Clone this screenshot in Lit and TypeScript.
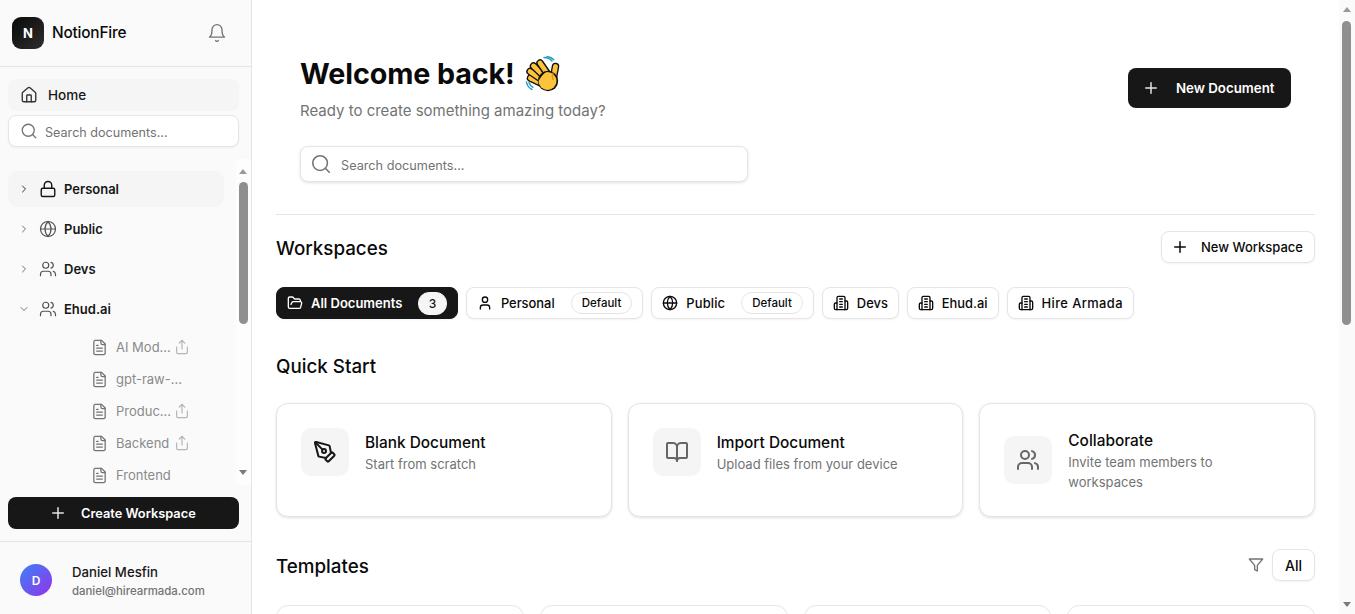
import { LitElement, html, css, svg } from "lit";
import { customElement } from "lit/decorators.js";

const P: Record<string, any> = {
  house: svg`<path d="M15 21v-8a1 1 0 0 0-1-1h-4a1 1 0 0 0-1 1v8"/><path d="M3 10a2 2 0 0 1 .709-1.528l7-5.999a2 2 0 0 1 2.582 0l7 5.999A2 2 0 0 1 21 10v9a2 2 0 0 1-2 2H5a2 2 0 0 1-2-2z"/>`,
  search: svg`<circle cx="11" cy="11" r="8"/><path d="m21 21-4.3-4.3"/>`,
  bell: svg`<path d="M6 8a6 6 0 0 1 12 0c0 7 3 9 3 9H3s3-2 3-9"/><path d="M10.3 21a1.94 1.94 0 0 0 3.4 0"/>`,
  lock: svg`<rect width="18" height="11" x="3" y="11" rx="2"/><path d="M7 11V7a5 5 0 0 1 10 0v4"/>`,
  globe: svg`<circle cx="12" cy="12" r="10"/><path d="M12 2a14.5 14.5 0 0 0 0 20 14.5 14.5 0 0 0 0-20"/><path d="M2 12h20"/>`,
  users: svg`<path d="M16 21v-2a4 4 0 0 0-4-4H6a4 4 0 0 0-4 4v2"/><circle cx="9" cy="7" r="4"/><path d="M22 21v-2a4 4 0 0 0-3-3.87"/><path d="M16 3.13a4 4 0 0 1 0 7.75"/>`,
  file: svg`<path d="M15 2H6a2 2 0 0 0-2 2v16a2 2 0 0 0 2 2h12a2 2 0 0 0 2-2V7Z"/><path d="M14 2v4a2 2 0 0 0 2 2h4"/><path d="M10 9H8"/><path d="M16 13H8"/><path d="M16 17H8"/>`,
  share: svg`<path d="M4 12v8a2 2 0 0 0 2 2h12a2 2 0 0 0 2-2v-8"/><polyline points="16 6 12 2 8 6"/><line x1="12" x2="12" y1="2" y2="15"/>`,
  plus: svg`<path d="M5 12h14"/><path d="M12 5v14"/>`,
  folder: svg`<path d="m6 14 1.5-2.9A2 2 0 0 1 9.24 10H20a2 2 0 0 1 1.94 2.5l-1.54 6a2 2 0 0 1-1.95 1.5H4a2 2 0 0 1-2-2V5a2 2 0 0 1 2-2h3.9a2 2 0 0 1 1.69.9l.81 1.2a2 2 0 0 0 1.69.9H18a2 2 0 0 1 2 2v2"/>`,
  user: svg`<path d="M19 21v-2a4 4 0 0 0-4-4H9a4 4 0 0 0-4 4v2"/><circle cx="12" cy="7" r="4"/>`,
  building: svg`<path d="M6 22V4a2 2 0 0 1 2-2h8a2 2 0 0 1 2 2v18Z"/><path d="M6 12H4a2 2 0 0 0-2 2v6a2 2 0 0 0 2 2h2"/><path d="M18 9h2a2 2 0 0 1 2 2v9a2 2 0 0 1-2 2h-2"/><path d="M10 6h4"/><path d="M10 10h4"/><path d="M10 14h4"/><path d="M10 18h4"/>`,
  pen: svg`<path d="M15.707 21.293a1 1 0 0 1-1.414 0l-1.586-1.586a1 1 0 0 1 0-1.414l5.586-5.586a1 1 0 0 1 1.414 0l1.586 1.586a1 1 0 0 1 0 1.414z"/><path d="m18 13-1.375-6.874a1 1 0 0 0-.746-.776L3.235 2.028a1 1 0 0 0-1.207 1.207L5.35 15.879a1 1 0 0 0 .776.746L13 18"/><path d="m2.3 2.3 7.286 7.286"/><circle cx="11" cy="11" r="2"/>`,
  book: svg`<path d="M12 7v14"/><path d="M3 18a1 1 0 0 1-1-1V4a1 1 0 0 1 1-1h5a4 4 0 0 1 4 4 4 4 0 0 1 4-4h5a1 1 0 0 1 1 1v13a1 1 0 0 1-1 1h-6a3 3 0 0 0-3 3 3 3 0 0 0-3-3z"/>`,
  filter: svg`<polygon points="22 3 2 3 10 12.46 10 19 14 21 14 12.46 22 3"/>`,
  right: svg`<path d="m9 18 6-6-6-6"/>`,
  down: svg`<path d="m6 9 6 6 6-6"/>`,
};

const icon = (n: string, size = 16, cls = "") =>
  html`<svg class="ic ${cls}" width=${size} height=${size} viewBox="0 0 24 24" fill="none" stroke="currentColor" stroke-width="2" stroke-linecap="round" stroke-linejoin="round">${P[n]}</svg>`;

const fingers: [number, number, number, number][] = [
  [18, 28, 5.5, 22],
  [19, 25, 5, 15.5],
  [21, 22, 8.5, 10],
  [24, 20, 15, 7],
];

const wave = html`<svg class="wave" width="36" height="36" viewBox="0 0 36 36" role="img" aria-label="waving hand">
  <g fill="none" stroke="#1d9bc4" stroke-width="1.4" stroke-linecap="round">
    <path d="M19 1.500c3 0 6 1.200 8 3.500"/><path d="M22 .6c2.500.2 5 1.300 6.800 3.200"/>
    <path d="M1.500 26c.5 3 2.500 6 5.500 7.500"/><path d="M4 26.500c.6 2 2 3.800 4 4.800"/>
  </g>
  <path d="M28 24 30.500 10.500" fill="none" stroke="#111" stroke-width="7.500" stroke-linecap="round"/>
  <path d="M28 24 30.500 10.500" fill="none" stroke="#fdc33a" stroke-width="4.800" stroke-linecap="round"/>
  ${fingers.map(([a, b, c, d]) => svg`
    <path d="M${a} ${b} ${c} ${d}" fill="none" stroke="#111" stroke-width="7.500" stroke-linecap="round"/>
    <path d="M${a} ${b} ${c} ${d}" fill="none" stroke="#fdc33a" stroke-width="4.800" stroke-linecap="round"/>`)}
  <circle cx="23" cy="25" r="10.200" fill="#111"/>
  <path d="M13.500 25a9 9 0 1 0 9-9c-3 0-6 4-9 9z" fill="#fdc33a"/>
  <path d="M28 17c-1.200 2.500-1 4.500 0 6.500" fill="none" stroke="#d99a1c" stroke-width="1.300" stroke-linecap="round"/>
</svg>`;

@customElement("app-root")
export class AppRoot extends LitElement {
  static styles = css`
    :host { display: flex; height: 614px; width: 1355px; overflow: hidden; background: #fff; color: #0a0a0a;
      font-family: Inter, "Noto Sans", sans-serif; font-size: 14px; }
    * { box-sizing: border-box; }
    .ic { flex: none; display: block; }

    /* sidebar */
    .side { width: 252px; flex: none; background: #fafafa; border-right: 1px solid #e5e5e5; display: flex; flex-direction: column; height: 614px; }
    .brand { height: 67px; flex: none; border-bottom: 1px solid #e5e5e5; display: flex; align-items: center; padding: 0 16px 1px 12px; }
    .logo { width: 32px; height: 32px; border-radius: 9px; background: linear-gradient(135deg, #0a0a0a, #2e2e2e); color: #fff; display: flex; align-items: center; justify-content: center; font-weight: 700; font-size: 13px; }
    .bname { margin-left: 8px; font-size: 15.400px; font-weight: 500; flex: 1; letter-spacing: -0.2px; }
    .bell { color: #737373; margin-right: 8px; }
    .bell .ic { stroke-width: 1.6; }
    .nav { padding: 12px 12px 0 8px; display: flex; flex-direction: column; gap: 4px; flex: none; }
    .home { height: 32px; border-radius: 8px; background: #f5f5f5; display: flex; align-items: center; padding-left: 12px; gap: 10px; font-size: 13.500px; font-weight: 500; color: #171717; }
    .home .ic { color: #333; stroke-width: 1.800; }
    .ssearch { height: 32px; border-radius: 8px; background: #fff; border: 1px solid #e5e5e5; box-shadow: 0 1px 2px rgba(0,0,0,.05); display: flex; align-items: center; padding: 0 0 0 11px; gap: 7px; font-size: 12.600px; color: #737373; }
    .ssearch .ic { color: #737373; stroke-width: 1.700; }
    .ssearch span { padding-top: 2px; }
    .treewrap { display: flex; height: 326px; margin-top: 12px; flex: none; }
    .tree { flex: 1; min-width: 0; overflow: hidden; padding: 12px 12px 0 8px; }
    .row { height: 36px; margin-bottom: 4px; border-radius: 10px; display: flex; align-items: center; padding-left: 10px; font-size: 13px; font-weight: 600; color: #171717; }
    .row.on { background: #f5f5f5; }
    .chev { color: #737373; margin-right: 9px; }
    .row.on .chev { color: #333; }
    .rico { color: #525252; margin-right: 7px; stroke-width: 1.600; }
    .row.on .rico { color: #171717; stroke-width: 1.900; }
    .files { padding: 0 0 0 83px; }
    .frow { height: 32px; display: flex; align-items: center; gap: 8px; color: #8a8a8a; font-size: 13px; }
    .frow .doc { color: #737373; stroke-width: 1.800; }
    .frow .sh { color: #b5b5b5; margin-left: -5px; stroke-width: 1.800; }
    .frow .t { white-space: nowrap; width: 55px; }
    .sb { flex: none; background: #fdfdfd; display: flex; flex-direction: column; align-items: center; }
    .sb.small { width: 15px; padding: 10px 1px 10px 0; }
    .sb.big { width: 16px; height: 614px; background: #fafafa; padding: 7px 1px 7px 0; }
    .arr { width: 0; height: 0; border-left: 4.500px solid transparent; border-right: 4.500px solid transparent; flex: none; }
    .arr.u { border-bottom: 5px solid #9a9a9a; }
    .arr.d { border-top: 5px solid #7a7a7a; }
    .thumb { width: 9px; background: #8f8f8f; border-radius: 5px; flex: none; }
    .sp { flex: 1; }
    .create { margin: 12px 12px 0 8px; height: 32px; border-radius: 8px; background: #171717; color: #fff; display: flex; align-items: center; padding-left: 41px; gap: 14px; font-size: 12.800px; font-weight: 600; flex: none; }
    .create .ic { color: #e5e5e5; }
    .foot { margin-top: 12px; border-top: 1px solid #e5e5e5; flex: 1; display: flex; align-items: center; padding: 4px 20px 0 20px; gap: 20px; }
    .av { width: 32px; height: 32px; border-radius: 50%; background: linear-gradient(135deg, #3b82f6, #9333ea); color: #fff; display: flex; align-items: center; justify-content: center; font-size: 12px; font-weight: 600; flex: none; }
    .who { padding-top: 3px; }
    .nm { font-size: 13.200px; font-weight: 500; line-height: 19px; color: #171717; }
    .em { font-size: 11.400px; line-height: 19px; color: #737373; font-weight: 500; }

    /* main */
    .main { flex: 1; min-width: 0; height: 614px; overflow: hidden; padding: 0 24px; }
    .hero { height: 215px; border-bottom: 1px solid #e5e5e5; padding: 55px 24px 0; }
    .toprow { display: flex; align-items: center; justify-content: space-between; }
    h1 { margin: 0; padding-top: 1px; font-size: 28.700px; line-height: 36px; font-weight: 700; display: flex; align-items: center; gap: 10px; letter-spacing: -0.1px; }
    .sub { margin-top: 7px; font-size: 15px; line-height: 24px; color: #737373; }
    .primary { height: 40px; width: 163px; margin-bottom: 2px; background: #171717; border-radius: 8px; color: #fff; display: flex; align-items: center; padding-left: 14px; gap: 16px; font-size: 13.300px; font-weight: 600; }
    .primary .ic { color: #e5e5e5; }
    .msearch { margin-top: 23px; width: 448px; height: 36px; border: 1px solid #e5e5e5; border-radius: 8px; background: #fff; box-shadow: 0 1px 3px rgba(0,0,0,.12); display: flex; align-items: center; padding: 0 0 0 9px; gap: 9px; font-size: 12.700px; color: #737373; }
    .msearch .ic { stroke-width: 1.700; }
    .msearch span { padding-top: 2px; }
    .shead { display: flex; align-items: center; justify-content: space-between; }
    h2 { margin: 0; font-size: 18.800px; line-height: 25px; padding-top: 3px; font-weight: 500; }
    .ws { margin-top: 16px; height: 32px; }
    .outline { height: 32px; border: 1px solid #e5e5e5; border-radius: 8px; background: #fff; box-shadow: 0 1px 2px rgba(0,0,0,.05); display: flex; align-items: center; font-size: 12.900px; font-weight: 500; }
    .newws { width: 154px; padding-left: 9px; gap: 12px; font-size: 13px; }
    .pills { margin-top: 24px; display: flex; gap: 8px; }
    .pill { height: 32px; padding: 0 10px; gap: 8px; white-space: nowrap; }
    .pill.dark { background: #171717; border-color: #171717; color: #fff; font-weight: 600; font-size: 13px; }
    .pub { letter-spacing: .15px; }
    .wide { letter-spacing: .4px; }
    .badge { margin-left: 8px; height: 22px; border-radius: 11px; border: 1px solid #e5e5e5; background: #fff; padding: 0 10px; font-size: 11.500px; display: flex; align-items: center; font-weight: 500; }
    .dark .badge { background: #f5f5f5; border-color: #f5f5f5; color: #171717; padding: 0 9.500px; height: 23px; font-size: 12px; }
    .qs { margin-top: 32px; }
    .cards { margin-top: 24px; display: grid; grid-template-columns: repeat(3, 1fr); gap: 16px; }
    .card { border: 1px solid #e5e5e5; border-radius: 12px; background: #fff; box-shadow: 0 1px 3px rgba(0,0,0,.12); padding: 24px; display: flex; align-items: flex-start; }
    .cin { display: flex; align-items: center; gap: 16px; }
    .cico { width: 48px; height: 48px; border-radius: 10px; background: #f5f5f5; display: flex; align-items: center; justify-content: center; color: #666; flex: none; }
    .cico.b { color: #171717; }
    .ct { font-size: 15.400px; line-height: 22px; padding-top: 2px; font-weight: 500; }
    .cs { font-size: 13px; line-height: 20px; color: #737373; }
    .tp { margin-top: 32px; }
    .tright { display: flex; align-items: center; gap: 8px; color: #737373; }
    .all { width: 43px; justify-content: center; color: #0a0a0a; font-size: 14px; }
    .tcards { margin-top: 24px; display: grid; grid-template-columns: repeat(4, 1fr); gap: 16px; }
    .tcard { height: 120px; border: 1px solid #e5e5e5; border-radius: 12px; background: #fff; }
  `;

  render() {
    const rows: [string, string, boolean][] = [["Personal", "lock", true], ["Public", "globe", false], ["Devs", "users", false]];
    const files: [string, boolean][] = [["AI Mod...", true], ["gpt-raw-...", false], ["Produc...", true], ["Backend", true], ["Frontend", false]];
    return html`
      <aside class="side">
        <div class="brand"><div class="logo">N</div><div class="bname">NotionFire</div><span class="bell">${icon("bell", 20)}</span></div>
        <div class="nav">
          <div class="home">${icon("house", 18)}<span>Home</span></div>
          <div class="ssearch">${icon("search", 18)}<span>Search documents...</span></div>
        </div>
        <div class="treewrap">
          <div class="tree">
            ${rows.map(([t, i, on]) => html`<div class="row ${on ? "on" : ""}">${icon("right", 12, "chev")}${icon(i, 18, "rico")}<span>${t}</span></div>`)}
            <div class="row">${icon("down", 12, "chev")}${icon("users", 18, "rico")}<span>Ehud.ai</span></div>
            <div class="files">
              ${files.map(([t, s]) => html`<div class="frow">${icon("file", 17, "doc")}<span class="t">${t}</span>${s ? icon("share", 16, "sh") : ""}</div>`)}
            </div>
          </div>
          <div class="sb small"><div class="arr u"></div><div class="thumb" style="height:142px;margin-top:8px"></div><div class="sp"></div><div class="arr d"></div></div>
        </div>
        <div class="create">${icon("plus", 18)}<span>Create Workspace</span></div>
        <div class="foot"><div class="av">D</div><div class="who"><div class="nm">Daniel Mesfin</div><div class="em">daniel@hirearmada.com</div></div></div>
      </aside>
      <main class="main">
        <section class="hero">
          <div class="toprow">
            <div><h1>Welcome back! ${wave}</h1><div class="sub">Ready to create something amazing today?</div></div>
            <div class="primary">${icon("plus", 18)}<span>New Document</span></div>
          </div>
          <div class="msearch">${icon("search", 22)}<span>Search documents...</span></div>
        </section>
        <div class="shead ws"><h2>Workspaces</h2><div class="outline newws">${icon("plus", 18)}<span>New Workspace</span></div></div>
        <div class="pills">
          <div class="outline pill dark">${icon("folder", 16)}<span>All Documents</span><span class="badge">3</span></div>
          <div class="outline pill">${icon("user", 16)}<span>Personal</span><span class="badge">Default</span></div>
          <div class="outline pill">${icon("globe", 16)}<span class="pub">Public</span><span class="badge">Default</span></div>
          <div class="outline pill">${icon("building", 16)}<span>Devs</span></div>
          <div class="outline pill">${icon("building", 16)}<span>Ehud.ai</span></div>
          <div class="outline pill">${icon("building", 16)}<span class="wide">Hire Armada</span></div>
        </div>
        <div class="shead qs"><h2>Quick Start</h2></div>
        <div class="cards">
          <div class="card"><div class="cin"><div class="cico b">${icon("pen", 24)}</div><div><div class="ct">Blank Document</div><div class="cs">Start from scratch</div></div></div></div>
          <div class="card"><div class="cin"><div class="cico">${icon("book", 24)}</div><div><div class="ct">Import Document</div><div class="cs">Upload files from your device</div></div></div></div>
          <div class="card"><div class="cin"><div class="cico">${icon("users", 24)}</div><div><div class="ct">Collaborate</div><div class="cs">Invite team members to<br />workspaces</div></div></div></div>
        </div>
        <div class="shead tp"><h2>Templates</h2><div class="tright">${icon("filter", 16)}<div class="outline all">All</div></div></div>
        <div class="tcards"><div class="tcard"></div><div class="tcard"></div><div class="tcard"></div><div class="tcard"></div></div>
      </main>
      <div class="sb big"><div class="arr u"></div><div class="thumb" style="height:304px;margin-top:9px"></div><div class="sp"></div><div class="arr d"></div></div>
    `;
  }
}
